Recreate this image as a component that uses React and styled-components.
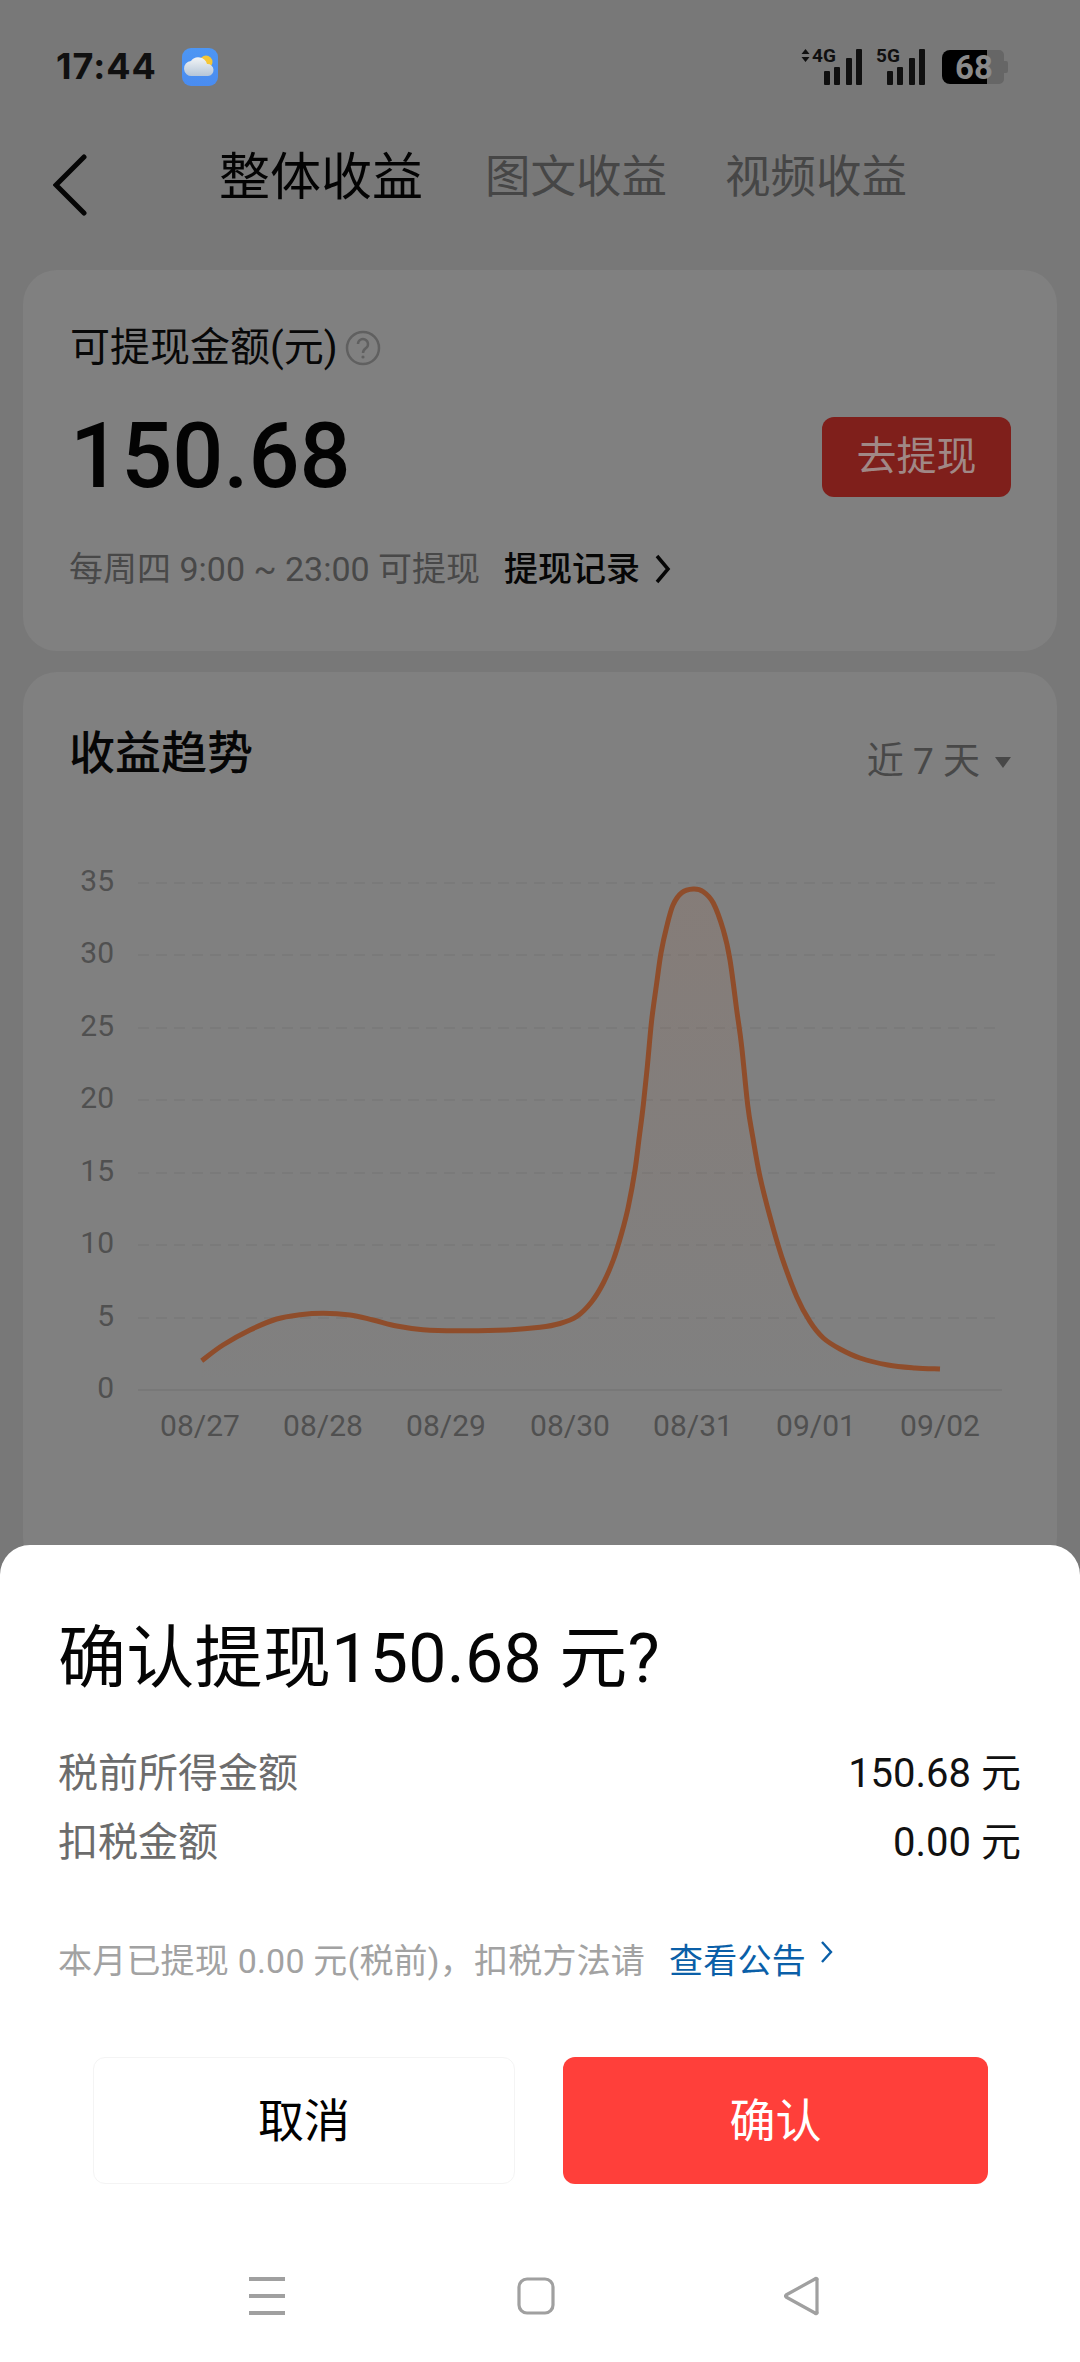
import React from 'react';
import styled, { createGlobalStyle } from 'styled-components';

const Global = createGlobalStyle`
  html, body { margin: 0; padding: 0; background: #787878; }
  * { box-sizing: border-box; }
  body { font-family: Roboto, "Noto Sans CJK SC", sans-serif; }
`;

const Screen = styled.div`
  position: relative;
  width: 1080px;
  height: 2362px;
  overflow: hidden;
  background: #787878;
  color: #000;
`;
const StatusBar = styled.div`
  height: 132px;
  display: flex;
  align-items: center;
  padding: 0 72px 0 56px;
`;
const Time = styled.span`
  font: 700 36px/40px Inter, Roboto, sans-serif;
  letter-spacing: 1px;
  color: #101010;
  width: 126px;
`;
const WeatherBadge = styled.svg`
  width: 36px;
  height: 38px;
  margin-top: 2px;
`;
const StatusIcons = styled.svg`
  margin-left: auto;
  width: 210px;
  height: 42px;
`;
const NavBar = styled.div`
  height: 88px;
  display: flex;
  align-items: center;
  padding-left: 53px;
`;
const BackIcon = styled.svg`
  width: 34px;
  height: 62px;
  flex: none;
  margin-top: 18px;
`;
const Tab = styled.span`
  font-size: ${p => (p.$active ? 51 : 45.5)}px;
  line-height: 60px;
  margin-top: 3px;
  color: ${p => (p.$active ? '#030303' : '#464646')};
  margin-left: ${p => p.$gap}px;
  white-space: nowrap;
`;
const Content = styled.div`
  padding: 50px 23px 0;
  display: flex;
  flex-direction: column;
  gap: 21px;
`;
const Card = styled.section`
  background: #808080;
  border-radius: 34px;
`;
const BalanceCard = styled(Card)`
  height: 381px;
  padding: 58px 46px 0 47px;
`;
const LabelRow = styled.div`
  display: flex;
  align-items: center;
  height: 40px;
  font-size: 40px;
  line-height: 40px;
  color: #080808;
`;
const HelpIcon = styled.svg`
  width: 36px;
  height: 36px;
  margin-left: 7px;
`;
const AmountRow = styled.div`
  margin-top: 49px;
  height: 80px;
  display: flex;
  align-items: center;
  justify-content: space-between;
`;
const Amount = styled.span`
  font: 500 90px/80px Roboto, sans-serif;
  color: #030303;
`;
const WithdrawButton = styled.button`
  width: 189px;
  height: 80px;
  border: 0;
  border-radius: 12px;
  background: #7f1f1b;
  color: #a08886;
  font: 400 40px/80px Roboto, "Noto Sans CJK SC", sans-serif;
  padding: 0;
`;
const HintRow = styled.div`
  margin: 52px 0 0 -1px;
  height: 40px;
  display: flex;
  align-items: center;
  font-size: 34px;
  line-height: 40px;
  color: #484848;
`;
const HintLink = styled.span`
  color: #060606;
  font-weight: 500;
  margin-left: 24px;
`;
const HintChevron = styled.svg`
  width: 17px;
  height: 30px;
  margin-left: 14px;
`;
const TrendCard = styled(Card)`
  height: 900px;
`;
const TrendHeader = styled.div`
  display: flex;
  justify-content: space-between;
  padding: 61px 46px 0 46px;
  height: 100px;
`;
const TrendTitle = styled.h2`
  margin: 0;
  font-size: 46px;
  line-height: 40px;
  font-weight: 500;
  color: #060606;
`;
const RangePicker = styled.div`
  display: flex;
  align-items: center;
  height: 40px;
  margin-top: 9px;
  font-size: 37px;
  line-height: 40px;
  color: #484848;
`;
const Caret = styled.svg`
  width: 16px;
  height: 11px;
  margin-left: 15px;
`;
const Chart = styled.svg`
  display: block;
  width: 1034px;
  height: 640px;
  margin-top: 78px;
  text {
    font-family: Roboto, sans-serif;
    font-size: 30px;
    fill: #505050;
  }
`;
const Sheet = styled.div`
  position: absolute;
  left: 0;
  right: 0;
  bottom: 0;
  height: 817px;
  background: #fff;
  border-radius: 30px 30px 0 0;
  padding: 74px 58px 0;
`;
const SheetTitle = styled.h1`
  margin: 0;
  font-size: 68px;
  line-height: 80px;
  font-weight: 400;
  color: #050505;
  white-space: nowrap;
  letter-spacing: 0.3px;
`;
const Row = styled.div`
  display: flex;
  justify-content: space-between;
  height: 50px;
  font-size: 40px;
  line-height: 50px;
  margin-top: ${p => p.$top}px;
`;
const RowLabel = styled.span`
  color: #6c6c6c;
`;
const RowValue = styled.span`
  color: #111;
  margin-right: 1px;
`;
const Note = styled.div`
  display: flex;
  align-items: center;
  height: 40px;
  margin-top: 73px;
  font-size: 34px;
  line-height: 40px;
  letter-spacing: 0.2px;
  color: #a2a2a2;
  white-space: nowrap;
`;
const NoteLink = styled.span`
  color: #0a5fa8;
  margin-left: 24px;
`;
const NoteChevron = styled.svg`
  width: 14px;
  height: 24px;
  margin: -18px 0 0 14px;
`;
const Actions = styled.div`
  display: flex;
  gap: 48px;
  margin: 76px 34px 0 35px;
`;
const ActionButton = styled.button`
  height: 127px;
  border-radius: 12px;
  font: 400 46px/1 Roboto, "Noto Sans CJK SC", sans-serif;
  padding: 0;
  flex: ${p => (p.$primary ? '0 0 425px' : '0 0 422px')};
  background: ${p => (p.$primary ? '#ff3f3a' : '#fff')};
  color: ${p => (p.$primary ? '#fff' : '#000')};
  border: ${p => (p.$primary ? '0' : '1px solid #f4f4f4')};
`;
const SystemNav = styled.div`
  margin: 92px 0 0 -58px;
  width: 1080px;
  height: 40px;
  display: flex;
  justify-content: flex-start;
  padding-left: 247px;
`;
const SystemIcon = styled.svg`
  width: 40px;
  height: 40px;
  margin-right: ${p => p.$gap}px;
`;

const pts = [
  [201.7,1360.7],[223,1345],[250,1330],[276.7,1319],[300,1314.7],[323.3,1313.3],[350,1315],[373,1320],[396.7,1326],
  [423,1329.7],[456.7,1330.7],[506.7,1330],[540,1327.3],[560,1323.5],[576.7,1316.5],[591.7,1301.7],[603.3,1283],
  [613.3,1260],[621.7,1233],[628.3,1206.7],[635,1170],[639.3,1136.7],[643.3,1105],[647.3,1066.7],[651.7,1020],
  [656.7,983],[661,953],[666.7,926.7],[673,905],[681.7,892.7],[693.3,889],[703.3,891.7],[713.3,903],[723.3,930],
  [730,960],[736.7,1010],[741.7,1046.7],[747.7,1105],[752.7,1136.7],[760,1176.7],[770,1216.7],[781.7,1256.7],
  [796.7,1296.7],[810,1321.7],[823.3,1338],[840,1349],[860,1358],[888,1365],[915,1368],[940,1369],
];

function smooth(p) {
  let d = `M${p[0][0]} ${p[0][1]}`;
  for (let i = 0; i < p.length - 1; i++) {
    const a = p[i - 1] || p[i], b = p[i], c = p[i + 1], e = p[i + 2] || c;
    const c1 = [b[0] + (c[0] - a[0]) / 6, b[1] + (c[1] - a[1]) / 6];
    const c2 = [c[0] - (e[0] - b[0]) / 6, c[1] - (e[1] - b[1]) / 6];
    d += `C${c1[0].toFixed(1)} ${c1[1].toFixed(1)} ${c2[0].toFixed(1)} ${c2[1].toFixed(1)} ${c[0]} ${c[1]}`;
  }
  return d;
}
const line = smooth(pts);
const yTicks = [[35,883],[30,955],[25,1028],[20,1100],[15,1173],[10,1245],[5,1318]];
const xTicks = [['08/27',200],['08/28',323],['08/29',446],['08/30',570],['08/31',693],['09/01',816],['09/02',940]];
const bars = [[0,23,14],[10,19,18],[22,10,27],[32,1,36]];

export default function App() {
  return (
    <Screen>
      <Global />
      <StatusBar>
        <Time>17:44</Time>
        <WeatherBadge viewBox="0 0 36 38">
          <defs>
            <linearGradient id="sky" x1="0" y1="0" x2="0" y2="1">
              <stop offset="0" stopColor="#4d96f4" /><stop offset="1" stopColor="#4a8cf0" />
            </linearGradient>
            <linearGradient id="cloud" x1="0" y1="0" x2="0" y2="1">
              <stop offset="0" stopColor="#f2f4f6" /><stop offset="1" stopColor="#b5c6d8" />
            </linearGradient>
          </defs>
          <rect width="36" height="38" rx="9" fill="url(#sky)" />
          <circle cx="24" cy="14" r="6.5" fill="#f5c636" />
          <path d="M10 28a7.5 7.5 0 0 1-1-15 9 9 0 0 1 16 3 6 6 0 0 1 1 12z" fill="url(#cloud)" />
        </WeatherBadge>
        <StatusIcons viewBox="798 46 210 42">
          <path d="M805.5 50l4 5h-8zM805.5 63l4-5h-8z" fill="#101010" />
          <text x="812" y="63" fontFamily="Roboto, sans-serif" fontWeight="700" fontSize="19" fill="#101010">4G</text>
          {bars.map(([x, y, h]) => <rect key={x} x={824 + x} y={49 + y} width="6" height={h} rx="1" fill="#101010" />)}
          <text x="876" y="63" fontFamily="Roboto, sans-serif" fontWeight="700" fontSize="19" fill="#101010">5G</text>
          {bars.map(([x, y, h]) => <rect key={x} x={887 + x} y={49 + y} width="6" height={h} rx="1" fill="#101010" />)}
          <path d="M950 51h37v34h-37a8 8 0 0 1-8-8v-18a8 8 0 0 1 8-8z" fill="#000" />
          <path d="M987 51h12a5 5 0 0 1 5 5v6h2a2 2 0 0 1 2 2v8a2 2 0 0 1-2 2h-2v6a5 5 0 0 1-5 5h-12z" fill="#666" />
          <text x="955" y="80" fontFamily="Roboto, sans-serif" fontWeight="700" fontSize="33" fill="#8a8a8a">68</text>
        </StatusIcons>
      </StatusBar>
      <NavBar>
        <BackIcon viewBox="0 0 34 62">
          <path d="M31 3L3 31l28 28" fill="none" stroke="#050505" strokeWidth="5" strokeLinecap="round" strokeLinejoin="miter" />
        </BackIcon>
        <Tab $active $gap={132}>整体收益</Tab>
        <Tab $gap={62}>图文收益</Tab>
        <Tab $gap={58}>视频收益</Tab>
      </NavBar>
      <Content>
        <BalanceCard>
          <LabelRow>
            可提现金额(元)
            <HelpIcon viewBox="0 0 36 36">
              <circle cx="18" cy="18" r="16" fill="none" stroke="#606060" strokeWidth="2.5" />
              <path d="M13 14a5 5 0 1 1 8 4c-2 1.5-3 2.5-3 5" fill="none" stroke="#606060" strokeWidth="2.5" />
              <circle cx="18" cy="27" r="1.6" fill="#606060" />
            </HelpIcon>
          </LabelRow>
          <AmountRow>
            <Amount>150.68</Amount>
            <WithdrawButton>去提现</WithdrawButton>
          </AmountRow>
          <HintRow>
            每周四 9:00 ~ 23:00 可提现
            <HintLink>提现记录</HintLink>
            <HintChevron viewBox="0 0 17 30">
              <path d="M3 2l11 13L3 28" fill="none" stroke="#060606" strokeWidth="3.5" />
            </HintChevron>
          </HintRow>
        </BalanceCard>
        <TrendCard>
          <TrendHeader>
            <TrendTitle>收益趋势</TrendTitle>
            <RangePicker>
              近 7 天
              <Caret viewBox="0 0 16 11"><path d="M0 0h16L8 11z" fill="#484848" /></Caret>
            </RangePicker>
          </TrendHeader>
          <Chart viewBox="23 850 1034 640">
            <defs>
              <linearGradient id="area" x1="0" y1="0" x2="0" y2="1">
                <stop offset="0" stopColor="#a06a50" stopOpacity="0.16" />
                <stop offset="1" stopColor="#a06a50" stopOpacity="0" />
              </linearGradient>
            </defs>
            {yTicks.map(([v, y]) => (
              <g key={v}>
                <line x1="138" x2="997" y1={y} y2={y} stroke="#7a7a7a" strokeWidth="2" strokeDasharray="11 7" />
                <text x="114" y={y + 8} textAnchor="end">{v}</text>
              </g>
            ))}
            <line x1="138" x2="1002" y1="1390" y2="1390" stroke="#787878" strokeWidth="2" />
            <text x="114" y="1398" textAnchor="end">0</text>
            {xTicks.map(([l, x]) => <text key={l} x={x} y="1436" textAnchor="middle">{l}</text>)}
            <path d={`${line}L940 1390L201.7 1390Z`} fill="url(#area)" />
            <path d={line} fill="none" stroke="#8f4d2b" strokeWidth="5" />
          </Chart>
        </TrendCard>
      </Content>
      <Sheet>
        <SheetTitle>确认提现150.68 元?</SheetTitle>
        <Row $top={50}><RowLabel>税前所得金额</RowLabel><RowValue>150.68 元</RowValue></Row>
        <Row $top={19}><RowLabel>扣税金额</RowLabel><RowValue>0.00 元</RowValue></Row>
        <Note>
          本月已提现 0.00 元(税前)，扣税方法请
          <NoteLink>查看公告</NoteLink>
          <NoteChevron viewBox="0 0 14 24">
            <path d="M2 2l9 10-9 10" fill="none" stroke="#0a5fa8" strokeWidth="2.4" />
          </NoteChevron>
        </Note>
        <Actions>
          <ActionButton>取消</ActionButton>
          <ActionButton $primary>确认</ActionButton>
        </Actions>
        <SystemNav>
          <SystemIcon viewBox="0 0 40 40" $gap={229}>
            <path d="M2 3h36M2 20h36M2 37h36" stroke="#a0a0a0" strokeWidth="4" />
          </SystemIcon>
          <SystemIcon viewBox="0 0 40 40" $gap={226}>
            <rect x="3" y="3" width="34" height="34" rx="8" fill="none" stroke="#a0a0a0" strokeWidth="3.2" />
          </SystemIcon>
          <SystemIcon viewBox="0 0 40 40" $gap={0}>
            <path d="M35 4v32a1 1 0 0 1-2 1L4 21a1.5 1.5 0 0 1 0-2L33 3a1 1 0 0 1 2 1z" fill="none" stroke="#a0a0a0" strokeWidth="3.2" strokeLinejoin="round" />
          </SystemIcon>
        </SystemNav>
      </Sheet>
    </Screen>
  );
}
